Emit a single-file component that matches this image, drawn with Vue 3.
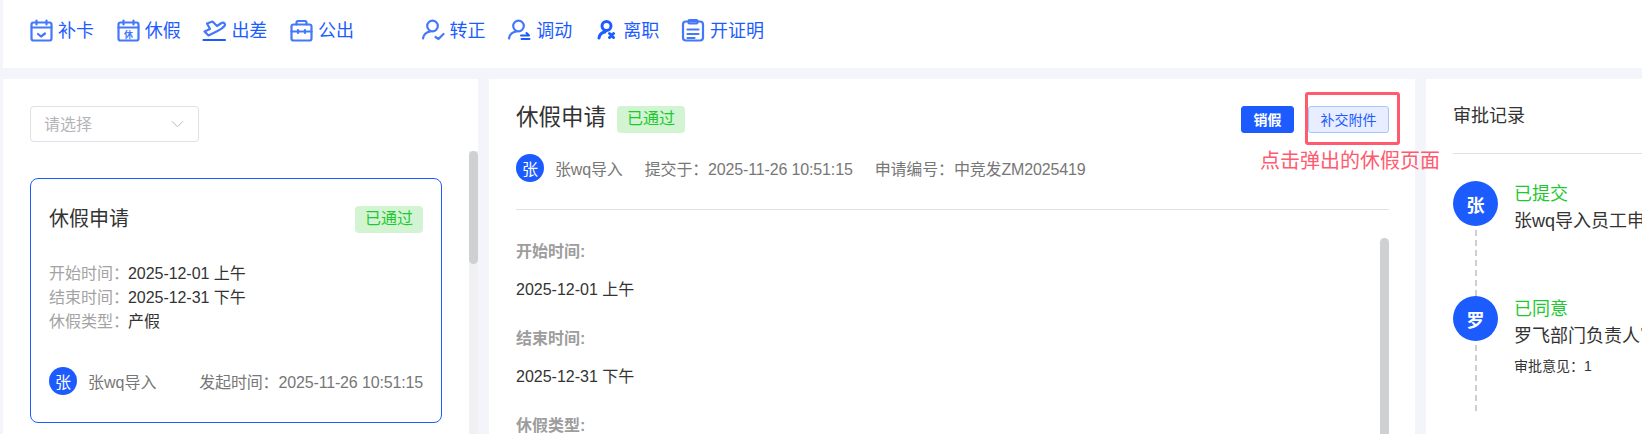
<script setup>
const cardRows = [
  { label: '开始时间：', value: '2025-12-01 上午' },
  { label: '结束时间：', value: '2025-12-31 下午' },
  { label: '休假类型：', value: '产假' },
]

const detailFields = [
  { label: '开始时间:', value: '2025-12-01 上午' },
  { label: '结束时间:', value: '2025-12-31 下午' },
  { label: '休假类型:', value: '产假' },
]

const records = [
  { id: 1, avatar: '张', status: '已提交', text: '张wq导入员工申请休假' },
  { id: 2, avatar: '罗', status: '已同意', text: '罗飞部门负责人审批通过', note: '审批意见：1' },
]
</script>

<template>
  <div class="page">
    <header class="toolbar">
      <div class="tool-group">
        <a class="tool">
          <svg class="icon" viewBox="0 0 24 24">
            <rect x="1.500" y="3.500" width="20" height="18" rx="2" />
            <path d="M1.500 8.500h20M6.500 1.500v4M16.500 1.500v4M8 15l3 2.500 4-3" />
          </svg>
          <span>补卡</span>
        </a>
        <a class="tool">
          <svg class="icon" viewBox="0 0 24 24">
            <rect x="1.500" y="3.500" width="20" height="18" rx="2" />
            <path d="M1.500 8.500h20M6.500 1.500v4M16.500 1.500v4" />
            <text x="11.500" y="18.500" class="icon-text">休</text>
          </svg>
          <span>休假</span>
        </a>
        <a class="tool">
          <svg class="icon" viewBox="0 0 24 24">
            <path d="M4 4.500L9.500 2.500 14 7l4.500-3c2.500-1 4.500 1 3 3-1.500 2-4 3.500-7 5l-9 4.500-4-4 5.500-2.500z" />
            <path class="solid" d="M0.500 21h21.500" />
          </svg>
          <span>出差</span>
        </a>
        <a class="tool">
          <svg class="icon" viewBox="0 0 24 24">
            <rect x="1.500" y="5.500" width="20" height="16" rx="2" />
            <path d="M6.500 5.500V3.500c0-1 .5-1.500 1.500-1.500h7c1 0 1.500.5 1.500 1.500v2M1.500 12.500h20M8 11v3M15 11v3" />
          </svg>
          <span>公出</span>
        </a>
      </div>

      <div class="tool-group second">
        <a class="tool wide">
          <svg class="icon" viewBox="0 0 26 24">
            <circle cx="12.500" cy="7" r="5.300" />
            <path d="M3 19.500c.5-4 3.500-6.500 7.500-7M15.500 18l3 2 5-5" />
          </svg>
          <span>转正</span>
        </a>
        <a class="tool wide">
          <svg class="icon" viewBox="0 0 26 24">
            <circle cx="12.500" cy="7" r="5.300" />
            <path d="M3 19.500c.5-4 3.500-6.500 7.500-7" />
            <path class="swap" d="M15 16.500h8l-2.500-2.500M23.500 20h-8" />
          </svg>
          <span>调动</span>
        </a>
        <a class="tool wide">
          <svg class="icon heavy" viewBox="0 0 26 24">
            <circle cx="13.500" cy="7" r="4.500" />
            <path d="M6 19c.5-3.500 2.500-5.500 6-6M16.500 14.500l4 4M20.500 14.500l-4 4" />
          </svg>
          <span>离职</span>
        </a>
        <a class="tool wide">
          <svg class="icon" viewBox="0 0 26 24">
            <rect x="3" y="2.500" width="20" height="19" rx="3" />
            <rect x="8.500" y="1" width="9" height="3.500" rx="1" />
            <path d="M7.500 10.500h11M7.500 15h11M7.500 19h7" />
          </svg>
          <span>开证明</span>
        </a>
      </div>
    </header>

    <main class="panels">
      <section class="list-panel">
        <div class="select">
          <span class="select-text">请选择</span>
          <svg class="chevron" viewBox="0 0 14 8"><path d="M1 1l6 6 6-6" /></svg>
        </div>

        <div class="list-scroll">
          <div class="list-content">
            <article class="card">
              <div class="card-head">
                <h3 class="card-title">休假申请</h3>
                <span class="tag">已通过</span>
              </div>
              <ul class="card-rows">
                <li v-for="row in cardRows" :key="row.label">
                  <span class="row-label">{{ row.label }}</span>{{ row.value }}
                </li>
              </ul>
              <div class="card-foot">
                <span class="avatar">张</span>
                <span class="foot-name">张wq导入</span>
                <span class="foot-time">发起时间：2025-11-26 10:51:15</span>
              </div>
            </article>
          </div>
          <div class="track"><div class="thumb"></div></div>
        </div>
      </section>

      <section class="detail-panel">
        <div class="detail-head">
          <h2 class="detail-title">休假申请</h2>
          <span class="tag">已通过</span>
          <div class="actions">
            <button class="btn primary">销假</button>
            <button class="btn plain">补交附件</button>
          </div>
        </div>
        <div class="detail-meta">
          <span class="avatar">张</span>
          <span class="meta-name">张wq导入</span>
          <span>提交于：2025-11-26 10:51:15</span>
          <span>申请编号：中竞发ZM2025419</span>
        </div>
        <div class="detail-body">
          <div class="fields">
            <div v-for="field in detailFields" :key="field.label" class="field">
              <div class="field-label">{{ field.label }}</div>
              <div class="field-value">{{ field.value }}</div>
            </div>
          </div>
          <div class="detail-thumb"></div>
        </div>
      </section>

      <section class="record-panel">
        <h3 class="record-title">审批记录</h3>
        <div class="timeline">
          <div v-for="rec in records" :key="rec.id" class="record">
            <div class="record-side">
              <span class="record-avatar">{{ rec.avatar }}</span>
              <span class="record-line"></span>
            </div>
            <div class="record-text">
              <div class="record-status">{{ rec.status }}</div>
              <div>{{ rec.text }}</div>
              <div v-if="rec.note" class="record-note">{{ rec.note }}</div>
            </div>
          </div>
        </div>
      </section>
    </main>

    <!-- annotation drawn over the screenshot -->
    <div class="mark-box"></div>
    <div class="mark-text">点击弹出的休假页面</div>
  </div>
</template>

<style>
html,
body {
  margin: 0;
  overflow: hidden;
}
</style>

<style scoped>
.page {
  position: relative;
  display: flex;
  flex-direction: column;
  width: 1642px;
  height: 434px;
  padding-left: 3px;
  box-sizing: border-box;
  overflow: hidden;
  background: #f3f5fb;
  color: #333;
  font-family: "Liberation Sans", "Noto Sans CJK SC", sans-serif;
  font-size: 16px;
}

.toolbar {
  display: flex;
  align-items: center;
  flex: none;
  height: 68px;
  padding: 0 0 6px 27px;
  box-sizing: border-box;
  background: #fff;
}
.tool-group {
  display: flex;
  gap: 22.700px;
}
.tool-group.second {
  gap: 20.800px;
  margin-left: 65.500px;
}
.tool {
  display: flex;
  align-items: center;
  gap: 4px;
  color: #1c5cff;
  font-size: 18px;
  line-height: 24px;
}
.icon {
  flex: none;
  width: 24px;
  height: 24px;
  overflow: visible;
  fill: none;
  stroke: #4478f8;
  stroke-width: 2.200;
  stroke-linecap: round;
  stroke-linejoin: round;
}
.tool.wide .icon {
  width: 26px;
}
.icon.heavy {
  stroke: #1c5cff;
  stroke-width: 3;
}
.icon .solid {
  stroke: #1c5cff;
}
.icon .swap {
  stroke: #1c5cff;
  stroke-width: 2;
}
.icon-text {
  fill: #4478f8;
  stroke: none;
  font-size: 9px;
  font-weight: 700;
  text-anchor: middle;
}

.panels {
  display: flex;
  gap: 11px;
  flex: 1;
  min-height: 0;
  margin-top: 11px;
}

.list-panel {
  display: flex;
  flex-direction: column;
  flex: none;
  width: 475px;
  padding-top: 27px;
  box-sizing: border-box;
  background: #fff;
}
.select {
  display: flex;
  align-items: center;
  justify-content: space-between;
  flex: none;
  width: 169px;
  height: 36px;
  margin-left: 27px;
  padding: 0 14px 0 13px;
  box-sizing: border-box;
  border: 1px solid #e0e0e8;
  border-radius: 4px;
  color: #b4b4b8;
}
.select-text {
  padding-bottom: 2px;
}
.chevron {
  width: 13px;
  height: 8px;
  fill: none;
  stroke: #b4b4b8;
  stroke-width: 1;
}
.list-scroll {
  display: flex;
  flex: 1;
  min-height: 0;
  margin-top: 9px;
}
.list-content {
  flex: 1;
  padding: 27px 27px 0;
}
.track {
  flex: none;
  width: 9px;
  background: #f1f1f1;
}
.thumb {
  height: 113px;
  border-radius: 5px;
  background: #cfd0d2;
}

.card {
  padding: 27px 18px;
  border: 1px solid #1c5cff;
  border-radius: 8px;
  background: #fff;
}
.card-head {
  display: flex;
  align-items: center;
  justify-content: space-between;
  height: 27px;
}
.card-title {
  margin: 0;
  padding-bottom: 2px;
  font-size: 20px;
  font-weight: 400;
  line-height: 24px;
}
.tag {
  display: inline-block;
  width: 68px;
  height: 27px;
  border-radius: 4px;
  background: #d3f4d3;
  color: #1ec92f;
  line-height: 25px;
  text-align: center;
}
.card-rows {
  margin: 29px 0 0;
  padding: 0;
  list-style: none;
  line-height: 24px;
  letter-spacing: -0.050px;
  white-space: nowrap;
}
.row-label {
  display: inline-block;
  width: 79px;
  color: #a3a3a3;
  letter-spacing: 0;
}
.card-foot {
  display: flex;
  align-items: center;
  margin-top: 33px;
  color: #777;
}
.avatar {
  display: flex;
  align-items: center;
  justify-content: center;
  flex: none;
  width: 28px;
  height: 28px;
  border-radius: 50%;
  background: #1c5cff;
  color: #fff;
}
.foot-name {
  margin-left: 11px;
}
.foot-time {
  margin-left: auto;
  letter-spacing: -0.150px;
}

.detail-panel {
  display: flex;
  flex-direction: column;
  flex: none;
  width: 926px;
  padding: 27px 26px 0 27px;
  box-sizing: border-box;
  background: #fff;
}
.detail-head {
  display: flex;
  align-items: center;
  flex: none;
  height: 27px;
}
.detail-title {
  margin: 0 11px 0 0;
  padding-bottom: 4px;
  font-size: 22.500px;
  font-weight: 400;
  line-height: 23px;
}
.actions {
  display: flex;
  gap: 14px;
  margin-left: auto;
}
.btn {
  height: 27px;
  padding: 0 0 2px;
  box-sizing: border-box;
  border: 1px solid #1c5cff;
  border-radius: 3px;
  font-family: inherit;
  font-size: 14px;
}
.btn.primary {
  width: 53px;
  background: #1c5cff;
  color: #fff;
  font-weight: 700;
}
.btn.plain {
  width: 81px;
  border-color: #a5c8fb;
  background: #e8eeff;
  color: #1c5cff;
}
.detail-meta {
  display: flex;
  align-items: center;
  flex: none;
  gap: 22px;
  height: 28px;
  margin-top: 21px;
  padding-bottom: 27px;
  border-bottom: 1px solid #e0e0e8;
  color: #777;
  letter-spacing: -0.150px;
}
.meta-name {
  margin-left: -11px;
}
.detail-body {
  display: flex;
  flex: 1;
  min-height: 0;
  margin-top: 28px;
}
.fields {
  flex: 1;
  padding-top: 2px;
}
.field {
  margin-bottom: 25px;
  line-height: 24px;
}
.field-label {
  margin-bottom: 14px;
  color: #9d9d9d;
  font-weight: 700;
}
.detail-thumb {
  flex: none;
  width: 9px;
  border-radius: 5px 5px 0 0;
  background: #cfd0d2;
}

.record-panel {
  flex: 1;
  min-width: 0;
  padding-left: 27px;
  overflow: hidden;
  background: #fff;
}
.record-title {
  height: 75px;
  margin: 0;
  box-sizing: border-box;
  border-bottom: 1px solid #e0e0e8;
  font-size: 18px;
  font-weight: 400;
  line-height: 74px;
}
.timeline {
  padding-top: 27px;
}
.record {
  display: flex;
  gap: 16px;
  height: 115px;
  white-space: nowrap;
}
.record-side {
  display: flex;
  flex-direction: column;
  align-items: center;
  flex: none;
  width: 45px;
}
.record-avatar {
  display: flex;
  align-items: center;
  justify-content: center;
  flex: none;
  width: 45px;
  height: 45px;
  border-radius: 50%;
  background: #1c5cff;
  color: #fff;
  font-size: 18px;
  font-weight: 700;
}
.record-line {
  flex: 1;
  margin-top: 4px;
  border-left: 2px dashed #cfcfcf;
}
.record-text {
  font-size: 18px;
  line-height: 27px;
}
.record-status {
  color: #1ec92f;
}
.record-note {
  margin-top: 6px;
  font-size: 14px;
  line-height: 20px;
}

.mark-box {
  position: absolute;
  top: 92px;
  left: 1305px;
  width: 95px;
  height: 53px;
  box-sizing: border-box;
  border: 3px solid #ff5a6e;
  border-radius: 3px;
}
.mark-text {
  position: absolute;
  top: 149px;
  left: 1260px;
  color: #ff5a6e;
  font-size: 20px;
  line-height: 24px;
  white-space: nowrap;
}
</style>
